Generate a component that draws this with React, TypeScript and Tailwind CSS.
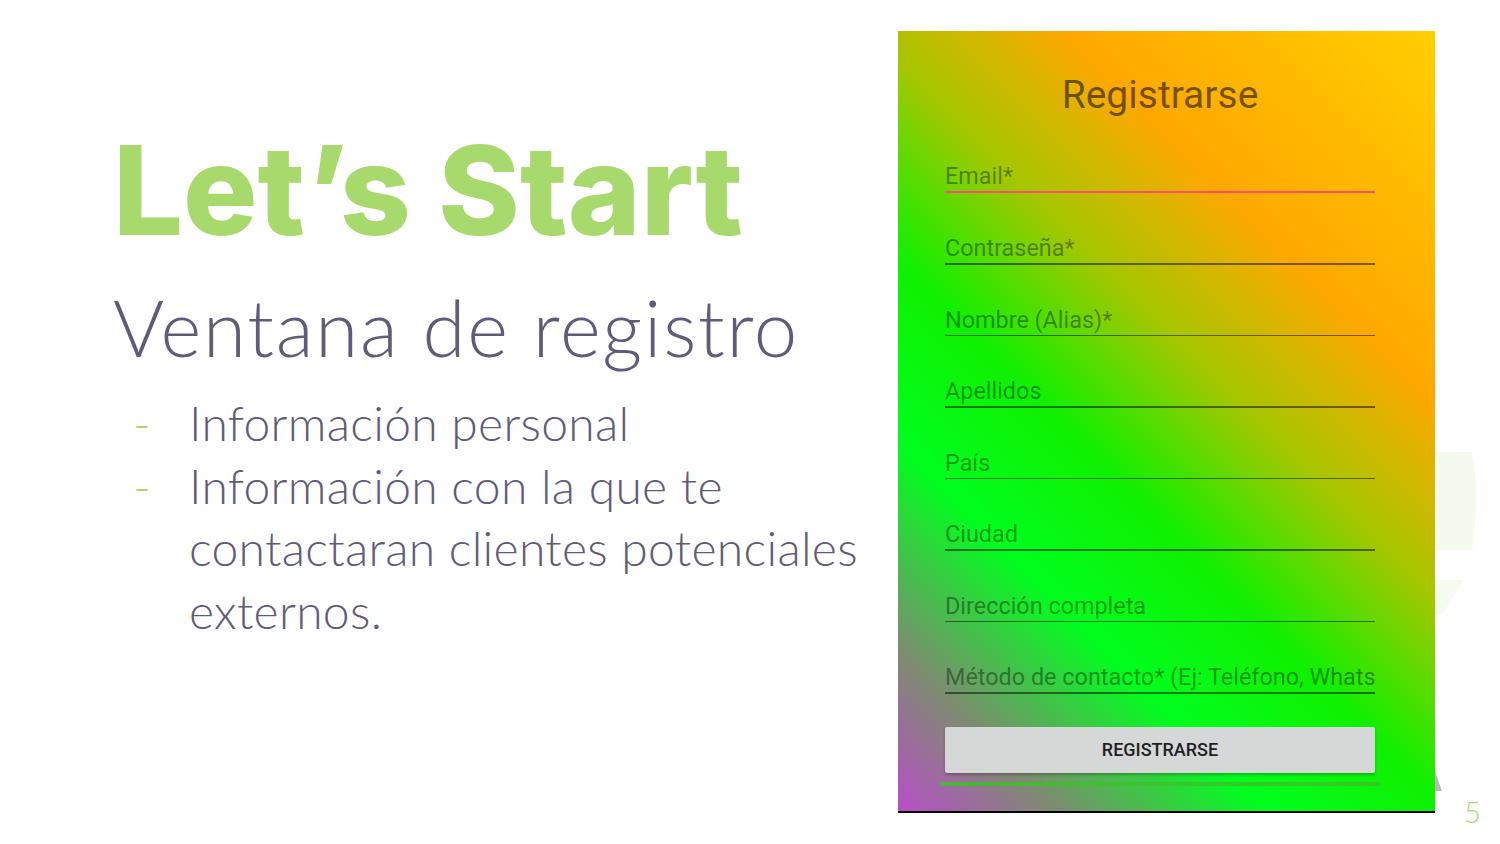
import React from "react";

const fields = [
  "Email*",
  "Contraseña*",
  "Nombre (Alias)*",
  "Apellidos",
  "País",
  "Ciudad",
  "Dirección completa",
  "Método de contacto* (Ej: Teléfono, Whats",
];

function PhoneForm() {
  return (
    <div
      className="relative w-[537px] h-[782px] border-b-2 border-black"
      style={{
        background:
          "linear-gradient(45deg, #b84fc8 0%, #7f8a72 12%, #00ff1e 28%, #10f000 42%, #a6c600 57%, #ffa800 72%, #ffcf00 100%)",
      }}
    >
      <div className="flex flex-col pl-[47px] pr-[60px]" style={{ fontFamily: "Roboto, sans-serif" }}>
        {/* Title */}
        <div className="h-[90.5px] pt-[45px] text-center text-[39px] leading-none text-black/55">
          Registrarse
        </div>

        {/* Fields */}
        {fields.map((f, i) => (
          <div key={f} className="h-[71.5px] flex flex-col justify-end">
            <div className="text-[23.4px] leading-[28px] pb-[1px] text-black/40 whitespace-nowrap">
              {f}
            </div>
            <div className={i === 0 ? "h-[2px] bg-[#ff4d6d]" : "h-[1.5px] bg-black/50"} />
          </div>
        ))}

        {/* Button */}
        <button className="mt-[33px] h-[46px] w-full rounded-[2px] bg-[#d6d8d8] text-[18px] font-medium text-[#1f1f1f] shadow-[0_2px_3px_rgba(0,0,0,0.25)]">
          REGISTRARSE
        </button>
        <div className="mt-[9px] -ml-[5px] -mr-[5px] h-[4px] bg-[#3fbf2a]/80" />
      </div>
    </div>
  );
}

export default function App() {
  return (
    <div className="relative w-[1500px] h-[844px] overflow-hidden bg-white">
      {/* faint background logo bits */}
      <svg className="absolute left-[1400px] top-[440px]" width="90" height="180" viewBox="0 0 90 180">
        <path d="M30 12 H72 Q80 50 72 110 H30 Z" fill="#f4faee" />
        <path d="M30 140 H64 L42 175 H30 Z" fill="#f6fbf1" />
      </svg>
      <svg className="absolute left-[1420px] top-[765px]" width="24" height="32" viewBox="0 0 24 32">
        <path d="M14 4 L22 26 H14 Z" fill="#b9b9b9" />
      </svg>

      <div className="flex h-full">
        {/* Left column */}
        <div className="w-[898px] pl-[113px] pt-[115px] flex flex-col" style={{ fontFamily: "Lato, sans-serif" }}>
          <div
            className="text-[124px] leading-[150px] font-extrabold text-[#a8d96c]"
            style={{ fontFamily: "Inter, sans-serif" }}
          >
            Let’s Start
          </div>
          <div className="mt-[17px] text-[78px] leading-[90px] font-light text-[#5f5b78] tracking-[1.8px]">
            Ventana de registro
          </div>
          <div className="mt-[20px] flex flex-col text-[48px] leading-[62.5px] font-light text-[#5f5b78] tracking-[0.3px]">
            <div className="flex">
              <span className="w-[76px] shrink-0 pl-[20px] text-[#a8d96c]">-</span>
              <span>Información personal</span>
            </div>
            <div className="flex">
              <span className="w-[76px] shrink-0 pl-[20px] text-[#a8d96c]">-</span>
              <span>
                Información con la que te
                <br />
                contactaran clientes potenciales
                <br />
                externos.
              </span>
            </div>
          </div>
        </div>

        {/* Phone screenshot */}
        <div className="pt-[31px]">
          <PhoneForm />
        </div>
      </div>

      <div
        className="absolute left-[1464px] top-[797px] text-[29px] leading-none font-light text-[#a8d96c]"
        style={{ fontFamily: "Lato, sans-serif" }}
      >
        5
      </div>
    </div>
  );
}
